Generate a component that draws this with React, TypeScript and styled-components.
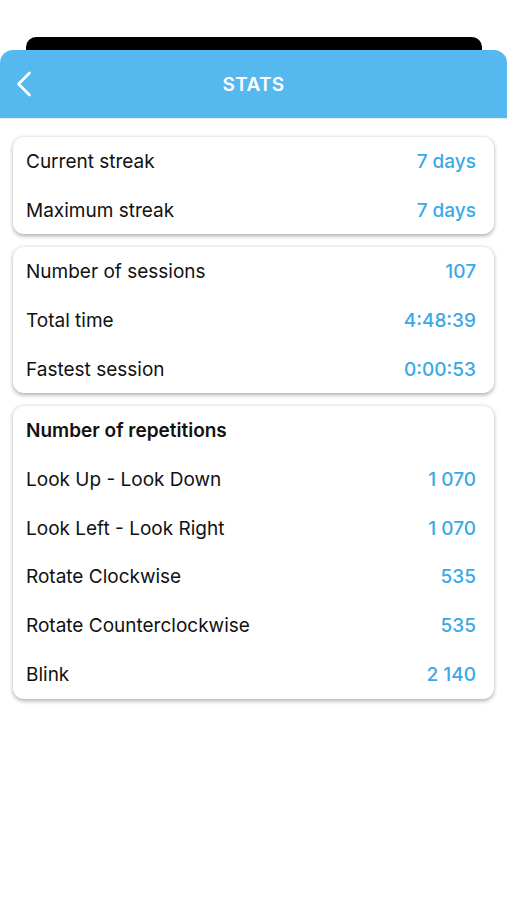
import React from 'react';
import styled, { createGlobalStyle } from 'styled-components';

const GlobalStyle = createGlobalStyle`
  html, body {
    margin: 0;
    padding: 0;
    background: #ffffff;
    font-family: Inter, "Noto Sans", "Liberation Sans", sans-serif;
  }
`;

const Screen = styled.div`
  width: 507px;
  min-height: 900px;
  background: #ffffff;
  padding-top: 37px;
  box-sizing: border-box;
`;

// the sheet underneath (iOS stacked modal look)
const BackSheet = styled.div`
  margin: 0 25px 0 26px;
  height: 13px;
  background: #000000;
  border-radius: 10px 10px 0 0;
`;

const Header = styled.header`
  position: relative;
  height: 68px;
  background: #55b9f0;
  border-radius: 13px 13px 0 0;
  display: flex;
  align-items: center;
  justify-content: center;
  border-bottom: 1px solid #e4eef5;
`;

const BackButton = styled.button`
  position: absolute;
  left: 12px;
  top: 50%;
  transform: translateY(-50%);
  background: none;
  border: none;
  padding: 0;
  display: flex;
  cursor: pointer;
`;

const Title = styled.h1`
  margin: 0;
  color: #ffffff;
  font-size: 19px;
  font-weight: 600;
  letter-spacing: 0.3px;
`;

const Content = styled.main`
  display: flex;
  flex-direction: column;
  gap: 13px;
  padding: 18px 13px 0;
`;

const Card = styled.section`
  background: #ffffff;
  border-radius: 11px;
  box-shadow: 0 1.5px 4px rgba(0, 0, 0, 0.32);
  display: flex;
  flex-direction: column;
`;

const Row = styled.div`
  height: 48.7px;
  display: flex;
  align-items: center;
  justify-content: space-between;
  padding: 0 18px 0 13px;
`;

const Label = styled.span<{ $bold?: boolean }>`
  font-size: 19px;
  color: #111111;
  font-weight: ${p => (p.$bold ? 600 : 400)};
`;

const Value = styled.span`
  font-size: 19px;
  font-weight: 500;
  color: #3aa9e8;
`;

type Stat = { label: string; value?: string; bold?: boolean };

const groups: Stat[][] = [
  [
    { label: 'Current streak', value: '7 days' },
    { label: 'Maximum streak', value: '7 days' },
  ],
  [
    { label: 'Number of sessions', value: '107' },
    { label: 'Total time', value: '4:48:39' },
    { label: 'Fastest session', value: '0:00:53' },
  ],
  [
    { label: 'Number of repetitions', bold: true },
    { label: 'Look Up - Look Down', value: '1 070' },
    { label: 'Look Left - Look Right', value: '1 070' },
    { label: 'Rotate Clockwise', value: '535' },
    { label: 'Rotate Counterclockwise', value: '535' },
    { label: 'Blink', value: '2 140' },
  ],
];

const App: React.FC = () => {
  return (
    <>
      <GlobalStyle />
      <Screen>
        <BackSheet />
        <Header>
          <BackButton aria-label="Back">
            <svg width="24" height="28" viewBox="0 0 24 28">
              <path d="M17.5 3 L6.5 14 L17.5 25" fill="none" stroke="#ffffff" strokeWidth="2.7" strokeLinecap="round" strokeLinejoin="round" />
            </svg>
          </BackButton>
          <Title>STATS</Title>
        </Header>
        <Content>
          {groups.map((g, i) => (
            <Card key={i}>
              {g.map(s => (
                <Row key={s.label}>
                  <Label $bold={s.bold}>{s.label}</Label>
                  {s.value && <Value>{s.value}</Value>}
                </Row>
              ))}
            </Card>
          ))}
        </Content>
      </Screen>
    </>
  );
};

export default App;
